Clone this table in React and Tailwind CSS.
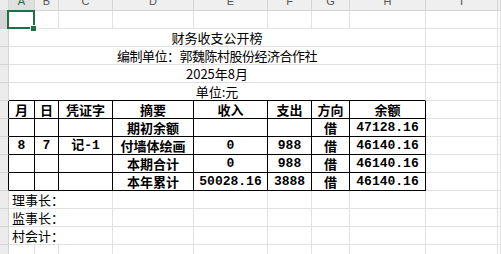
import React from "react";

const CJK = "font-['Noto_Sans_CJK_SC',sans-serif]";
const MONO = "font-['Liberation_Mono','Noto_Sans_CJK_SC',monospace]";

function Hdr({ sel, black }) {
  return (
    <div
      className={`box-border border-b border-r border-b-[#d4d4d4] ${
        black ? "border-r-black" : "border-r-[#d4d4d4]"
      } ${sel ? "bg-[#d6d6d6]" : "bg-[#ececec]"}`}
    />
  );
}

function Cell({ cls = "", children }) {
  return (
    <div
      className={`box-border border-b border-r border-[#e1e1e1] flex items-center ${cls}`}
    >
      {children}
    </div>
  );
}

function TCell({ children, mono }) {
  return (
    <div
      className={`box-border border-b border-r border-black flex items-center justify-center text-[13px] font-bold text-black leading-none ${
        mono ? MONO : CJK
      }`}
    >
      {children}
    </div>
  );
}

const letters = ["A", "B", "C", "D", "E", "F", "G", "H", "I", ""];

const table = [
  ["月", "日", "凭证字", "摘要", "收入", "支出", "方向", "余额"],
  ["", "", "", "期初余额", "", "", "借", "47128.16"],
  ["8", "7", "记-1", "付墙体绘画", "0", "988", "借", "46140.16"],
  ["", "", "", "本期合计", "0", "988", "借", "46140.16"],
  ["", "", "", "本年累计", "50028.16", "3888", "借", "46140.16"],
];

export default function App() {
  return (
    <div className="relative w-[501px] h-[254px] overflow-hidden bg-white">
      <div className="grid w-full grid-cols-[9px_26px_24px_54px_81px_74px_44px_38px_76px_72px_1fr] grid-rows-[11px_repeat(14,18px)]">
        {/* column headers */}
        <div className="box-border border-b border-r border-[#d4d4d4] bg-[#ececec]" />
        {letters.map((l, i) => (
          <div
            key={i}
            className={`box-border border-b border-r border-[#d4d4d4] overflow-hidden flex justify-center ${
              i === 0 ? "bg-[#e0e0e0]" : "bg-[#efefef]"
            }`}
          >
            <span
              className={`-mt-[5px] text-[11px] leading-[12px] font-['Liberation_Sans',sans-serif] ${
                i === 0 ? "text-[#217346]" : "text-[#555555]"
              }`}
            >
              {l}
            </span>
          </div>
        ))}

        {/* row 1 */}
        <Hdr sel />
        {letters.map((_, i) => (
          <Cell key={"r1" + i} />
        ))}

        {/* rows 2-5 */}
        {[
          ["财务收支公开榜", "text-[13px]"],
          ["编制单位：郭魏陈村股份经济合作社", "text-[13px] tracking-[-0.5px]"],
          ["2025年8月", "text-[13px]"],
          ["单位:元", "text-[13px]"],
        ].map(([t, size], r) => (
          <React.Fragment key={"t" + r}>
            <Hdr />
            <div
              className={`col-span-8 box-border border-b border-r ${
                r === 3 ? "border-b-black" : "border-b-[#e1e1e1]"
              } border-r-[#e1e1e1] flex items-center justify-center ${size} ${CJK} text-black leading-none`}
            >
              {t}
            </div>
            <Cell />
            <Cell />
          </React.Fragment>
        ))}

        {/* table rows */}
        {table.map((row, r) => (
          <React.Fragment key={"tb" + r}>
            <Hdr black />
            {row.map((c, i) => (
              <TCell key={i} mono={/^[0-9.\-记]+$/.test(c) && c !== ""}>
                {c}
              </TCell>
            ))}
            <Cell />
            <Cell />
          </React.Fragment>
        ))}

        {/* signature rows */}
        {["理事长：", "监事长：", "村会计："].map((t, r) => (
          <React.Fragment key={"s" + r}>
            <Hdr />
            <div
              className={`col-span-3 box-border border-b border-r border-[#e1e1e1] flex items-center pl-[3px] text-[13px] ${CJK} text-black leading-none`}
            >
              {t}
            </div>
            {[0, 1, 2, 3, 4, 5, 6].map((i) => (
              <Cell key={i} />
            ))}
          </React.Fragment>
        ))}

        {/* row 14 */}
        <Hdr />
        {letters.map((_, i) => (
          <Cell key={"r14" + i} />
        ))}
      </div>

      {/* selection box */}
      <div className="absolute left-[7px] top-[10px] w-[28px] h-[19px] border-2 border-[#1e7145]" />
      <div className="absolute left-[31px] top-[26px] w-[5px] h-[5px] bg-[#1e7145] outline outline-1 outline-white" />
    </div>
  );
}
